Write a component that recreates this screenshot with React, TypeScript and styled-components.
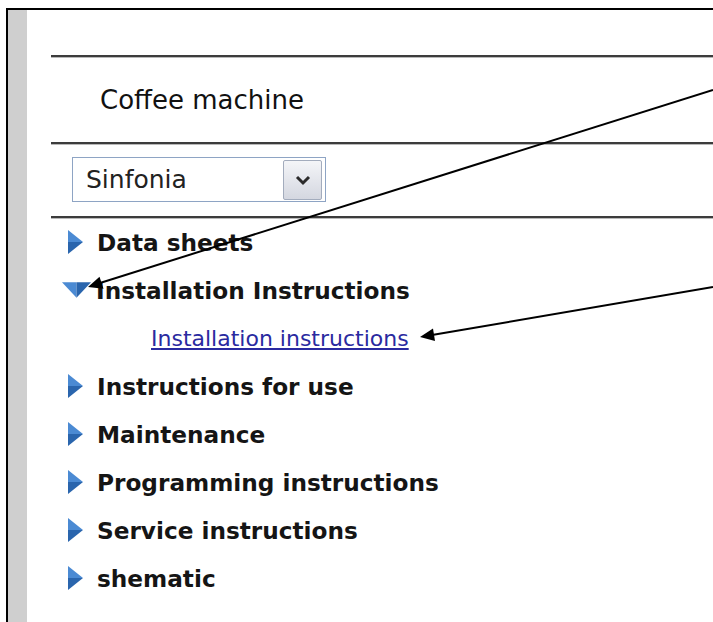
import React from 'react';
import styled, { createGlobalStyle } from 'styled-components';

const GlobalStyle = createGlobalStyle`
  html, body {
    margin: 0;
    padding: 0;
    background: #ffffff;
  }
  body {
    font-family: "DejaVu Sans", "Liberation Sans", Arial, sans-serif;
    color: #1a1a1a;
    overflow: hidden;
  }
`;

const sections = [
  { label: 'Data sheets', open: false },
  { label: 'Installation Instructions', open: true, children: ['Installation instructions'] },
  { label: 'Instructions for use', open: false },
  { label: 'Maintenance', open: false },
  { label: 'Programming instructions', open: false },
  { label: 'Service instructions', open: false },
  { label: 'shematic', open: false },
];

const Arrow = ({ open }: { open: boolean }) =>
  open ? (
    <svg width="30" height="16" viewBox="0 0 30 16">
      <polygon points="0,0 15,0 15,16" fill="#4b8ad3" />
      <polygon points="15,0 30,0 15,16" fill="#2a65ad" />
    </svg>
  ) : (
    <svg width="15" height="24" viewBox="0 0 15 24">
      <polygon points="0,0 15,12 0,12" fill="#4b8ad3" />
      <polygon points="0,12 15,12 0,24" fill="#2a65ad" />
    </svg>
  );

const Callouts = () => (
  <Overlay width="713" height="622" viewBox="0 0 713 622">
    <line x1="713" y1="90" x2="100" y2="283" stroke="#000" strokeWidth="2" />
    <polygon points="88,287 103.5,288.8 99.5,276.8" fill="#000" />
    <line x1="713" y1="287" x2="432" y2="335" stroke="#000" strokeWidth="2" />
    <polygon points="420,337 435,341 433,328.5" fill="#000" />
  </Overlay>
);

const App = () => {
  return (
    <Page>
      <GlobalStyle />
      <Frame>
        <Sidebar />
        <Main>
          <Rule />
          <TitleBlock>Coffee machine</TitleBlock>
          <Rule />
          <SelectRow>
            <Select>
              <SelectValue>Sinfonia</SelectValue>
              <DropButton>
                <svg width="16" height="12" viewBox="0 0 16 12">
                  <path d="M2 3 L8 9 L14 3" fill="none" stroke="#2b2b2b" strokeWidth="3" />
                </svg>
              </DropButton>
            </Select>
          </SelectRow>
          <Rule />
          <Tree>
            {sections.map((s) => (
              <React.Fragment key={s.label}>
                <Row>
                  <IconBox open={s.open}>
                    <Arrow open={s.open} />
                  </IconBox>
                  <RowLabel>{s.label}</RowLabel>
                </Row>
                {s.children?.map((c) => (
                  <ChildRow key={c}>
                    <Link href="#">{c}</Link>
                  </ChildRow>
                ))}
              </React.Fragment>
            ))}
          </Tree>
        </Main>
      </Frame>
      <Callouts />
    </Page>
  );
};

export default App;

const Page = styled.div`
  position: relative;
  width: 713px;
  height: 622px;
  padding: 8px 0 0 6px;
  box-sizing: border-box;
  overflow: hidden;
`;

const Frame = styled.div`
  display: flex;
  height: 100%;
  border-left: 2px solid #000;
  border-top: 2px solid #000;
`;

const Sidebar = styled.div`
  width: 19px;
  flex-shrink: 0;
  background: #cfcfcf;
`;

const Main = styled.div`
  flex: 1;
  padding: 45px 0 0 24px;
  display: flex;
  flex-direction: column;
`;

const Rule = styled.div`
  height: 2px;
  background: #3c3c3c;
  box-shadow: 0 1px 0 #b8b8b8;
`;

const TitleBlock = styled.div`
  height: 85px;
  display: flex;
  align-items: center;
  padding-left: 49px;
  font-size: 26px;
  color: #111;
`;

const SelectRow = styled.div`
  height: 72px;
  padding: 13px 0 0 21px;
  box-sizing: border-box;
`;

const Select = styled.div`
  width: 254px;
  height: 45px;
  box-sizing: border-box;
  border: 1px solid #8ea4c4;
  display: flex;
  align-items: center;
  justify-content: space-between;
  padding: 2px 3px 2px 13px;
  background: #fff;
`;

const SelectValue = styled.span`
  font-size: 25px;
  color: #222;
`;

const DropButton = styled.div`
  width: 39px;
  height: 40px;
  box-sizing: border-box;
  border: 1px solid #a3acbd;
  border-radius: 2px;
  background: linear-gradient(#f4f5f8, #d4d7e0);
  display: flex;
  align-items: center;
  justify-content: center;
`;

const Tree = styled.div`
  display: flex;
  flex-direction: column;
`;

const Row = styled.div`
  height: 48px;
  display: flex;
  align-items: center;
  padding-left: 17px;
`;

const IconBox = styled.div<{ open: boolean }>`
  width: 29px;
  display: flex;
  align-items: center;
  margin-left: ${(p) => (p.open ? '-6px' : '0')};
  margin-right: ${(p) => (p.open ? '5px' : '0')};
`;

const RowLabel = styled.span`
  font-size: 23.2px;
  font-weight: bold;
  color: #151515;
`;

const ChildRow = styled.div`
  height: 48px;
  display: flex;
  align-items: center;
  padding-left: 100px;
`;

const Link = styled.a`
  font-size: 22px;
  color: #2a2aa0;
  text-decoration: underline;
`;

const Overlay = styled.svg`
  position: absolute;
  top: 0;
  left: 0;
  pointer-events: none;
`;
